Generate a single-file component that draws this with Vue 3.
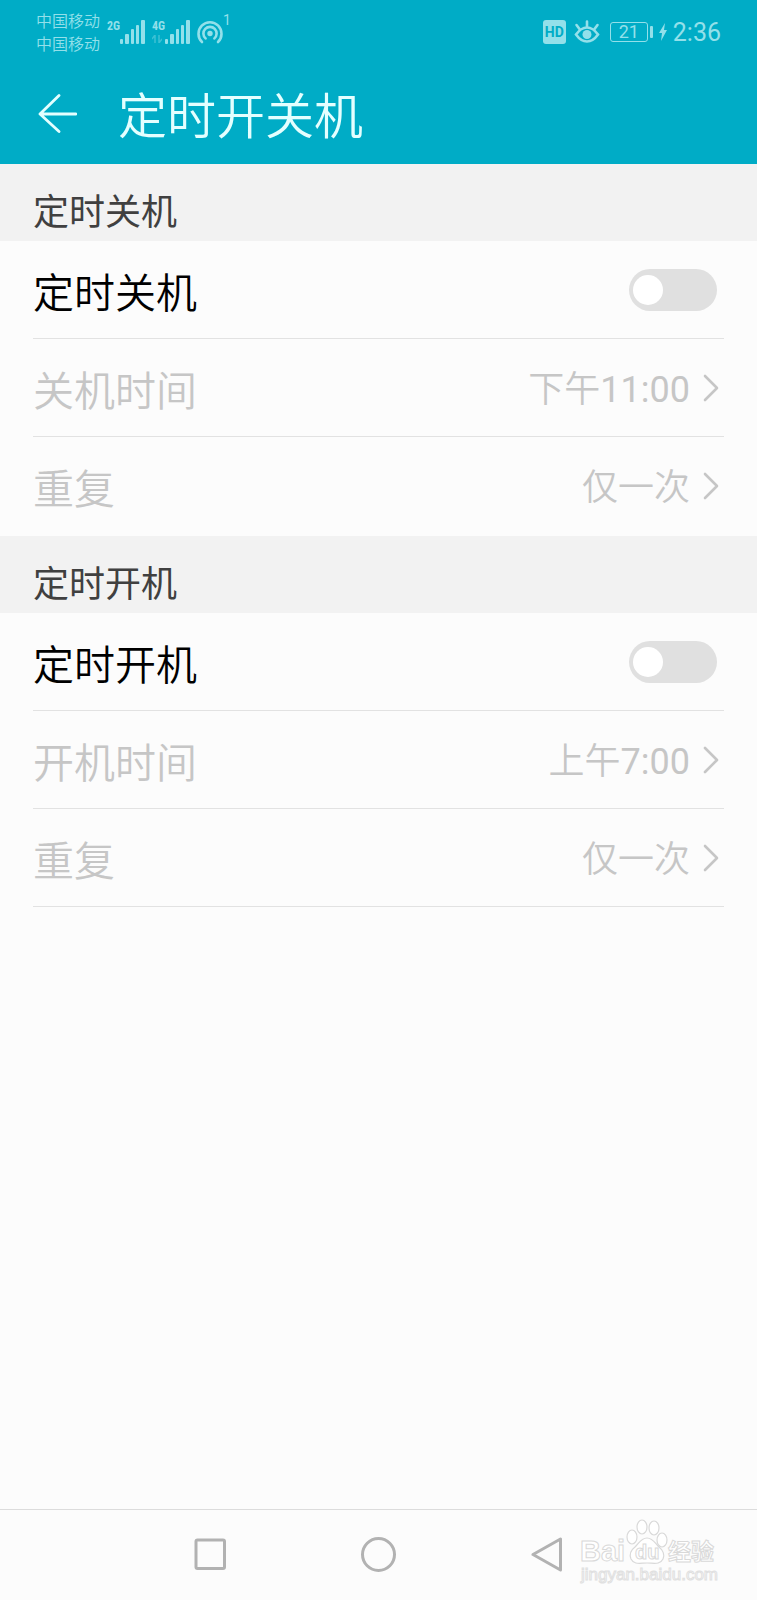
<template>
    <div class="screen">
        <header class="top">
            <div class="status-bar">
                <div class="carriers">
                    <span>中国移动</span>
                    <span>中国移动</span>
                </div>
                <div v-for="sim in sims" :key="sim.network" class="signal">
                    <div class="signal-type">
                        <span>{{ sim.network }}</span>
                        <svg v-if="sim.data" class="data-arrows" width="10" height="8" viewBox="0 0 10 8">
                            <path d="M3 8V0L0 4M7 0v8l3-4" fill="none" stroke="currentColor" stroke-width="1.5" />
                        </svg>
                    </div>
                    <svg width="26" height="24" viewBox="0 0 26 24">
                        <g fill="currentColor">
                            <rect x="0" y="19" width="3" height="5" rx="1" />
                            <rect x="5" y="14" width="4" height="10" rx="1" />
                            <rect x="11" y="9" width="3" height="15" rx="1" />
                            <rect x="16" y="5" width="3" height="19" rx="1" />
                            <rect x="21" y="0" width="4" height="24" rx="1" />
                        </g>
                    </svg>
                </div>
                <div class="hotspot">
                    <svg width="26" height="24" viewBox="0 0 26 24">
                        <g fill="none" stroke="currentColor" stroke-width="2.6" stroke-linecap="round">
                            <path d="M5 22A11.5 11.5 0 1 1 21 22" />
                            <path d="M8.6 18.4A6.6 6.6 0 1 1 17.4 18.4" />
                        </g>
                        <circle cx="13" cy="13.5" r="2.7" fill="currentColor" />
                    </svg>
                    <span>1</span>
                </div>
                <div class="status-right">
                    <span class="hd">HD</span>
                    <svg width="26" height="24" viewBox="0 0 26 24">
                        <g fill="none" stroke="currentColor" stroke-width="2.6" stroke-linecap="round">
                            <path d="M2 14.5Q7 7.5 13 7.5T24 14.5Q19 21.5 13 21.5T2 14.5Z" />
                            <path d="M13 1.5v5M2.5 5l3 4M23.5 5l-3 4" />
                        </g>
                        <circle cx="13" cy="14.5" r="4.5" fill="currentColor" />
                    </svg>
                    <div class="battery">
                        <span class="battery-level">21</span>
                        <span class="battery-tip"></span>
                        <svg width="8" height="18" viewBox="0 0 8 18">
                            <path d="M6 0L0 10h3L2 18L8 7H5z" fill="currentColor" />
                        </svg>
                    </div>
                    <time class="clock">2:36</time>
                </div>
            </div>
            <div class="title-bar">
                <button class="back" aria-label="返回">
                    <svg width="40" height="40" viewBox="0 0 40 40">
                        <path d="M22 1.5L3 20L22 37.5M3 20H39" fill="none" stroke="currentColor" stroke-width="2.8" stroke-linecap="round" stroke-linejoin="round" />
                    </svg>
                </button>
                <h1>定时开关机</h1>
            </div>
        </header>

        <main class="content">
            <section v-for="section in sections" :key="section.id" class="group">
                <h2>{{ section.title }}</h2>
                <ul>
                    <li>
                        <label class="row" :for="section.id">
                            <span class="row-label">{{ section.title }}</span>
                            <input :id="section.id" v-model="section.enabled" class="switch" type="checkbox" role="switch">
                        </label>
                    </li>
                    <li v-for="item in section.items" :key="item.label">
                        <button class="row" :disabled="!section.enabled">
                            <span class="row-label">{{ item.label }}</span>
                            <span class="row-value">{{ item.value }}<time v-if="item.time">{{ item.time }}</time></span>
                            <svg class="chevron" width="16" height="28" viewBox="0 0 16 28">
                                <path d="M2 2L14 14L2 26" fill="none" stroke="currentColor" stroke-width="2.6" stroke-linecap="round" stroke-linejoin="round" />
                            </svg>
                        </button>
                    </li>
                </ul>
            </section>
        </main>

        <nav class="nav-bar">
            <button aria-label="最近任务">
                <svg width="36" height="36" viewBox="0 0 36 36">
                    <rect x="3" y="3" width="28.5" height="28.5" rx="1.5" />
                </svg>
            </button>
            <button aria-label="主屏幕">
                <svg width="36" height="36" viewBox="0 0 36 36">
                    <circle cx="17.5" cy="17.5" r="16" />
                </svg>
            </button>
            <button aria-label="返回">
                <svg width="36" height="36" viewBox="0 0 36 36">
                    <path d="M31.5 2V33L4 17.5z" />
                </svg>
            </button>
            <svg class="watermark" width="140" height="72" viewBox="0 0 140 72">
                <g class="mark-shape">
                    <ellipse cx="53" cy="27" rx="5" ry="7" />
                    <ellipse cx="63" cy="17" rx="5" ry="7" />
                    <ellipse cx="75" cy="18" rx="5" ry="7" />
                    <ellipse cx="83" cy="30" rx="5" ry="7" />
                    <path d="M68 28C74 28 76 33 80 37C84 40 86 45 84 49C81 55 75 53 68 53S55 55 52 49C50 44 52 40 56 37C60 33 62 28 68 28Z" />
                </g>
                <g class="mark-text">
                    <text x="1" y="51" font-size="29">Bai</text>
                    <text x="56" y="49" font-size="20">du</text>
                    <text x="89" y="50" font-size="23">经验</text>
                    <text class="mark-url" x="2" y="70" font-size="17">jingyan.baidu.com</text>
                </g>
            </svg>
        </nav>
    </div>
</template>

<script setup>
    import { ref } from 'vue';

    const sims = [
        { network: '2G', data: false },
        { network: '4G', data: true },
    ];

    const sections = ref([
        {
            id: 'power-off',
            title: '定时关机',
            enabled: false,
            items: [
                { label: '关机时间', value: '下午', time: '11:00' },
                { label: '重复', value: '仅一次' },
            ],
        },
        {
            id: 'power-on',
            title: '定时开机',
            enabled: false,
            items: [
                { label: '开机时间', value: '上午', time: '7:00' },
                { label: '重复', value: '仅一次' },
            ],
        },
    ]);
</script>

<style>
    body {
        margin: 0;
        background: #fcfcfc;
    }
</style>

<style scoped>
    .screen {
        display: flex;
        flex-direction: column;
        min-height: 100vh;
        background: #fcfcfc;
        font-family: Roboto, "Noto Sans CJK SC", sans-serif;
        color: #000;
    }

    button {
        padding: 0;
        border: none;
        background: none;
        color: inherit;
        font: inherit;
        cursor: pointer;
    }

    svg { display: block; flex-shrink: 0; }

    /* Header */
    .top {
        height: 164px;
        background: #00acc6;
        color: #e4ffff;
    }

    .status-bar {
        display: flex;
        align-items: center;
        height: 64px;
        padding: 0 36px;
        color: #93e0ea;
    }

    .carriers {
        display: flex;
        flex-direction: column;
        margin-right: 7px;
        padding-top: 2px;
        font-size: 16px;
        line-height: 23px;
        font-weight: 350;
    }

    .signal {
        display: flex;
        align-items: center;
        margin-right: 6px;
    }

    .signal-type {
        height: 24px;
        width: 13px;
        font-family: "Liberation Sans Narrow", "Roboto Condensed", Roboto, sans-serif;
        font-size: 12px;
        line-height: 12px;
        font-weight: bold;
    }

    .data-arrows {
        margin-top: 3px;
        opacity: 0.4;
    }

    .hotspot {
        display: flex;
        align-items: center;
    }

    .hotspot span {
        align-self: flex-start;
        margin-top: -8px;
        font-size: 14px;
        line-height: 16px;
    }

    .status-right {
        display: flex;
        align-items: center;
        gap: 8px;
        margin-left: auto;
    }

    .hd {
        width: 23px;
        border-radius: 3px;
        background: #93e0ea;
        color: #00acc6;
        font-size: 14px;
        font-weight: bold;
        line-height: 24px;
        text-align: center;
    }

    .battery {
        display: flex;
        align-items: center;
        margin-left: 2px;
    }

    .battery-level {
        width: 36px;
        border: 1px solid currentColor;
        border-radius: 3px;
        font-size: 18px;
        line-height: 18px;
        text-align: center;
    }

    .battery-tip {
        width: 3px;
        height: 12px;
        margin: 0 6px 0 2px;
        border-radius: 1px;
        background: currentColor;
    }

    .clock {
        margin-left: -2px;
        font-size: 25px;
    }

    .title-bar {
        display: flex;
        align-items: center;
        gap: 41px;
        height: 100px;
        padding: 0 37px;
    }

    .title-bar h1 {
        margin: 0;
        padding-top: 8px;
        font-size: 49px;
        line-height: 60px;
        font-weight: 350;
    }

    /* Settings */
    .content { flex: 1; }

    .group h2 {
        margin: 0;
        padding: 21px 33px 0;
        background: #f2f2f2;
        color: #404040;
        font-size: 36px;
        line-height: 56px;
        font-weight: 400;
    }

    .group ul {
        margin: 0;
        padding: 0 33px 1px;
        list-style: none;
    }

    .group li { border-bottom: 1px solid #e2e2e2; }

    .group:not(:last-child) li:last-child { border-color: transparent; }

    .row {
        display: flex;
        align-items: center;
        width: 100%;
        height: 97px;
        font-weight: 350;
        cursor: pointer;
    }

    .row:disabled {
        color: #c6c6c6;
        cursor: default;
    }

    .row-label {
        flex: 1;
        padding-top: 8px;
        font-size: 41px;
        line-height: 60px;
        text-align: left;
    }

    .row-value {
        padding-top: 4px;
        font-size: 36px;
        line-height: 60px;
    }

    .row-value time { font-weight: 400; }

    .chevron { margin: 0 5px 0 13px; }

    .switch {
        appearance: none;
        width: 88px;
        height: 42px;
        margin: 0 7px 0 0;
        padding: 6px 4px;
        border-radius: 21px;
        background: #e0e0e0;
        cursor: pointer;
    }

    .switch::before {
        content: "";
        display: block;
        width: 30px;
        height: 30px;
        border-radius: 50%;
        background: #fff;
    }

    .switch:checked { background: #00acc6; }
    .switch:checked::before { margin-left: auto; }

    /* System navigation */
    .nav-bar {
        position: relative;
        display: flex;
        align-items: center;
        justify-content: center;
        gap: 132px;
        height: 90px;
        border-top: 1px solid #dcdcdc;
    }

    .nav-bar button svg {
        fill: none;
        stroke: #b2b2b2;
        stroke-width: 3;
        stroke-linejoin: round;
    }

    .watermark {
        position: absolute;
        right: 38px;
        bottom: 18px;
        overflow: visible;
        pointer-events: none;
    }

    .mark-shape,
    .mark-text {
        fill: #fff;
        stroke: #d9d9d9;
        stroke-width: 1.2;
    }

    .mark-text {
        font-family: "Liberation Sans", "Noto Sans CJK SC", sans-serif;
        font-weight: bold;
        stroke-width: 1;
    }

    .mark-url {
        font-weight: normal;
        stroke: #e0e0e0;
    }
</style>
